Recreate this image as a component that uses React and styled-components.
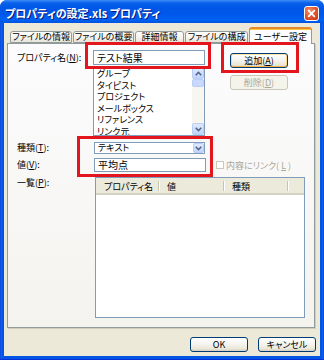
import React from "react";
import styled, { createGlobalStyle } from "styled-components";

const UI = `"Noto Sans CJK JP", "Liberation Sans", sans-serif`;

const GlobalStyle = createGlobalStyle`
  html, body { margin: 0; padding: 0; background: #ffffff; }
  body {
    font-family: ${UI};
    font-size: 9px;
    font-feature-settings: "palt" 1;
    color: #000;
  }
  #root { width: 324px; height: 360px; }
`;

const Window = styled.div`
  width: 324px;
  height: 360px;
  box-sizing: border-box;
  display: flex;
  flex-direction: column;
  border-radius: 7px 7px 0 0;
  overflow: hidden;
  background: linear-gradient(
    to right,
    #0831d9 0,
    #166aee 1px,
    #0055e5 2px,
    #0055e5 calc(100% - 2px),
    #166aee calc(100% - 1px),
    #0831d9 100%
  );
  box-shadow: inset 0 -1px 0 #0831d9;
`;

const TitleBar = styled.div`
  height: 23px;
  flex: none;
  display: flex;
  justify-content: space-between;
  align-items: flex-start;
  padding: 0 5px 0 5px;
  box-sizing: border-box;
  background: linear-gradient(
    to bottom,
    #3d8ef9 0,
    #0a61ea 3px,
    #0056e6 8px,
    #0059ec 15px,
    #0062f2 20px,
    #0052de 23px
  );
`;

const TitleText = styled.div`
  color: #fff;
  font-weight: bold;
  font-size: 11px;
  line-height: 14px;
  padding-top: 6px;
  text-shadow: 1px 1px 0 #0a1883;
  white-space: nowrap;
`;

const CloseButton = styled.div`
  width: 15px;
  height: 15px;
  margin-top: 6px;
  box-sizing: border-box;
  border: 1px solid #ffffff;
  border-radius: 3px;
  background: radial-gradient(circle at 35% 30%, #f29677 0, #e35a32 45%, #c5360f 100%);
  display: flex;
  align-items: center;
  justify-content: center;
`;

const Client = styled.div`
  flex: 1;
  margin: 0 4px 4px 4px;
  background: #ece9d8;
  display: flex;
  flex-direction: column;
`;

const TabStrip = styled.div`
  height: 20px;
  box-sizing: border-box;
  padding: 4px 0 0 6px;
  display: flex;
  align-items: flex-end;
  gap: 1px;
  position: relative;
  z-index: 1;
`;

const Tab = styled.div`
  width: ${(p) => p.$w}px;
  height: ${(p) => (p.$active ? 17 : 12)}px;
  margin-bottom: ${(p) => (p.$active ? -1 : 0)}px;
  box-sizing: border-box;
  border: 1px solid #919b9c;
  border-bottom: ${(p) => (p.$active ? "none" : "1px solid #919b9c")};
  border-top: ${(p) => (p.$active ? "2px solid #e68b2c" : "1px solid #919b9c")};
  border-radius: 3px 3px 0 0;
  background: ${(p) =>
    p.$active
      ? "linear-gradient(#ffc73c 0, #ffc73c 1px, #fcfcfe 1px, #fcfcfe 100%)"
      : "linear-gradient(#ffffff, #f3f2ec 60%, #e6e3d8)"};
  font-size: 9px;
  line-height: ${(p) => (p.$active ? 13 : 10)}px;
  padding-top: ${(p) => (p.$active ? 1 : 0)}px;
  text-align: center;
  white-space: nowrap;
  overflow: hidden;
`;

const Panel = styled.div`
  position: relative;
  margin-left: 3px;
  width: 308px;
  height: 285px;
  box-sizing: border-box;
  border: 1px solid #919b9c;
  background: linear-gradient(#fcfcfe, #f4f3ee);
  box-shadow: 1px 1px 0 #d0cebf;
  padding: 6px 0 0 9px;
  display: flex;
  flex-direction: column;
`;

const PropRow = styled.div`
  display: flex;
  align-items: flex-start;
`;

const Label = styled.div`
  width: ${(p) => p.$w}px;
  flex: none;
  line-height: ${(p) => p.$lh || 15}px;
  white-space: nowrap;
`;

const FieldCol = styled.div`
  width: 112px;
  display: flex;
  flex-direction: column;
  position: relative;
`;

const TextBox = styled.div`
  position: relative;
  width: ${(p) => p.$w || 112}px;
  height: ${(p) => p.$h || 15}px;
  box-sizing: border-box;
  border: 1px solid #7f9db9;
  background: #fff;
  padding-left: 3px;
  font-size: 10px;
  line-height: ${(p) => (p.$h || 15) - 2}px;
  white-space: nowrap;
`;

const ListBox = styled.div`
  margin-top: 1px;
  height: 70px;
  box-sizing: border-box;
  border: 1px solid #7f9db9;
  background: #fff;
  display: flex;
  overflow: hidden;
`;

const ListItems = styled.div`
  flex: 1;
  padding: 1px 0 0 3px;
  overflow: hidden;
`;

const ListItem = styled.div`
  height: 11.5px;
  line-height: 11.5px;
  white-space: nowrap;
`;

const ScrollBar = styled.div`
  width: 12px;
  display: flex;
  flex-direction: column;
  background: #f7f6f1;
`;

const ArrowBtn = styled.div`
  height: ${(p) => p.$h || 12}px;
  width: ${(p) => p.$w || 12}px;
  box-sizing: border-box;
  border: 1px solid #b9cdf7;
  border-radius: 2px;
  background: linear-gradient(#e1eafe, #c1d3fb);
  display: flex;
  align-items: center;
  justify-content: center;
  flex: none;
`;

const Thumb = styled.div`
  height: 8px;
  box-sizing: border-box;
  border: 1px solid #b8cef9;
  border-radius: 2px;
  background: #c9d8fc;
`;

const Track = styled.div`
  flex: 1;
`;

const ButtonCol = styled.div`
  margin-left: 25px;
  padding-top: 3px;
  display: flex;
  flex-direction: column;
  gap: 7px;
`;

const Button = styled.div`
  position: relative;
  width: 58px;
  height: 15px;
  box-sizing: border-box;
  border: 1px solid ${(p) => (p.$disabled ? "#c9c7ba" : "#003c74")};
  border-radius: 3px;
  background: ${(p) =>
    p.$disabled
      ? "#f5f4ea"
      : "linear-gradient(#ffffff, #f4f3ee 50%, #ece9d8 80%, #d6d0c5)"};
  box-shadow: ${(p) =>
    p.$hot ? "inset 0 1px 0 #ffe6a6, inset 0 -1px 0 #f5b34a, inset 1px 0 0 #fbd58b, inset -1px 0 0 #fbd58b" : "none"};
  color: ${(p) => (p.$disabled ? "#aca899" : "#000")};
  font-size: 9px;
  line-height: 13px;
  text-align: center;
  white-space: nowrap;
`;

const FieldGroup = styled.div`
  position: relative;
  margin-top: 6px;
  display: flex;
  flex-direction: column;
  gap: 4px;
`;

const Row = styled.div`
  display: flex;
  align-items: center;
`;

const Combo = styled.div`
  width: 111px;
  height: 12px;
  box-sizing: border-box;
  border: 1px solid #7f9db9;
  background: #fff;
  display: flex;
  align-items: center;
  justify-content: space-between;
  padding: 0 0 0 3px;
  line-height: 10px;
  white-space: nowrap;
`;

const CheckWrap = styled.div`
  margin-left: 10px;
  display: flex;
  align-items: center;
  gap: 2px;
  color: #aca899;
  white-space: nowrap;
`;

const CheckBox = styled.div`
  width: 8px;
  height: 8px;
  box-sizing: border-box;
  border: 1px solid #cac8bb;
  background: #fff;
`;

const ListRow = styled.div`
  display: flex;
  align-items: flex-start;
  margin-top: 5px;
`;

const ListView = styled.div`
  width: 210px;
  height: 141px;
  box-sizing: border-box;
  border: 1px solid #7f9db9;
  background: #fff;
  display: flex;
  flex-direction: column;
`;

const Header = styled.div`
  height: 17px;
  box-sizing: border-box;
  display: flex;
  background: #ebeadb;
  border-bottom: 2px solid #d6d2c2;
`;

const HeaderCell = styled.div`
  position: relative;
  width: ${(p) => (p.$w ? `${p.$w}px` : "auto")};
  flex: ${(p) => (p.$w ? "none" : 1)};
  padding: 3px 0 0 8px;
  box-sizing: border-box;
  line-height: 12px;
  white-space: nowrap;
  &::after {
    content: "";
    display: ${(p) => (p.$w ? "block" : "none")};
    position: absolute;
    right: 0;
    top: 3px;
    bottom: 2px;
    width: 1px;
    background: #c7c5b2;
    box-shadow: 1px 0 0 #ffffff;
  }
`;

const Highlight = styled.span`
  position: absolute;
  top: ${(p) => p.$t}px;
  left: ${(p) => p.$l}px;
  width: ${(p) => p.$w}px;
  height: ${(p) => p.$h}px;
  box-sizing: border-box;
  border: 3px solid #e3161e;
  pointer-events: none;
  z-index: 2;
`;

const ButtonBar = styled.div`
  display: flex;
  justify-content: flex-end;
  gap: 10px;
  padding: 9px 4px 0 0;
`;

const Chevron = ({ up }) => (
  <svg width="7" height="5" viewBox="0 0 7 5">
    <path
      d={up ? "M0.8 4.2 L3.5 1.3 L6.2 4.2" : "M0.8 0.8 L3.5 3.7 L6.2 0.8"}
      fill="none"
      stroke="#4d6185"
      strokeWidth="1.6"
    />
  </svg>
);

const tabs = [
  { t: "ファイルの情報", w: 62 },
  { t: "ファイルの概要", w: 61 },
  { t: "詳細情報", w: 49 },
  { t: "ファイルの構成", w: 63 },
  { t: "ユーザー設定", w: 63, active: true },
];

const items = ["グループ", "タイピスト", "プロジェクト", "メールボックス", "リファレンス", "リンク元"];

export default function App() {
  return (
    <>
      <GlobalStyle />
      <Window>
        <TitleBar>
          <TitleText>プロパティの設定.xls プロパティ</TitleText>
          <CloseButton>
            <svg width="9" height="9" viewBox="0 0 9 9">
              <path d="M1.2 1.2 L7.8 7.8 M7.8 1.2 L1.2 7.8" stroke="#fff" strokeWidth="1.8" />
            </svg>
          </CloseButton>
        </TitleBar>
        <Client>
          <TabStrip>
            {tabs.map((t) => (
              <Tab key={t.t} $w={t.w} $active={t.active}>
                {t.t}
              </Tab>
            ))}
          </TabStrip>
          <Panel>
            <PropRow>
              <Label $w={76}>
                プロパティ名(<u>N</u>):
              </Label>
              <FieldCol>
                <TextBox>
                  テスト結果
                  <Highlight $t={-9} $l={-9} $w={126} $h={27} />
                </TextBox>
                <ListBox>
                  <ListItems>
                    {items.map((i) => (
                      <ListItem key={i}>{i}</ListItem>
                    ))}
                  </ListItems>
                  <ScrollBar>
                    <ArrowBtn>
                      <Chevron up />
                    </ArrowBtn>
                    <Thumb />
                    <Track />
                    <ArrowBtn>
                      <Chevron />
                    </ArrowBtn>
                  </ScrollBar>
                </ListBox>
              </FieldCol>
              <ButtonCol>
                <Button $hot>
                  追加(<u>A</u>)
                  <Highlight $t={-12} $l={-10} $w={78} $h={31} />
                </Button>
                <Button $disabled>
                  削除(<u>D</u>)
                </Button>
              </ButtonCol>
            </PropRow>
            <FieldGroup>
              <Highlight $t={-6} $l={60} $w={136} $h={41} />
              <Row>
                <Label $w={77} $lh={12}>
                  種類(<u>T</u>):
                </Label>
                <Combo>
                  テキスト
                  <ArrowBtn $w={11} $h={10}>
                    <Chevron />
                  </ArrowBtn>
                </Combo>
              </Row>
              <Row>
                <Label $w={77} $lh={14}>
                  値(<u>V</u>):
                </Label>
                <TextBox $w={112} $h={14}>
                  平均点
                </TextBox>
                <CheckWrap>
                  <CheckBox />
                  内容にリンク(<u>L</u>)
                </CheckWrap>
              </Row>
            </FieldGroup>
            <ListRow>
              <Label $w={78} $lh={12}>
                一覧(<u>P</u>):
              </Label>
              <ListView>
                <Header>
                  <HeaderCell $w={63}>プロパティ名</HeaderCell>
                  <HeaderCell $w={65}>値</HeaderCell>
                  <HeaderCell $w={64}>種類</HeaderCell>
                  <HeaderCell />
                </Header>
              </ListView>
            </ListRow>
          </Panel>
          <ButtonBar>
            <Button>OK</Button>
            <Button>キャンセル</Button>
          </ButtonBar>
        </Client>
      </Window>
    </>
  );
}
